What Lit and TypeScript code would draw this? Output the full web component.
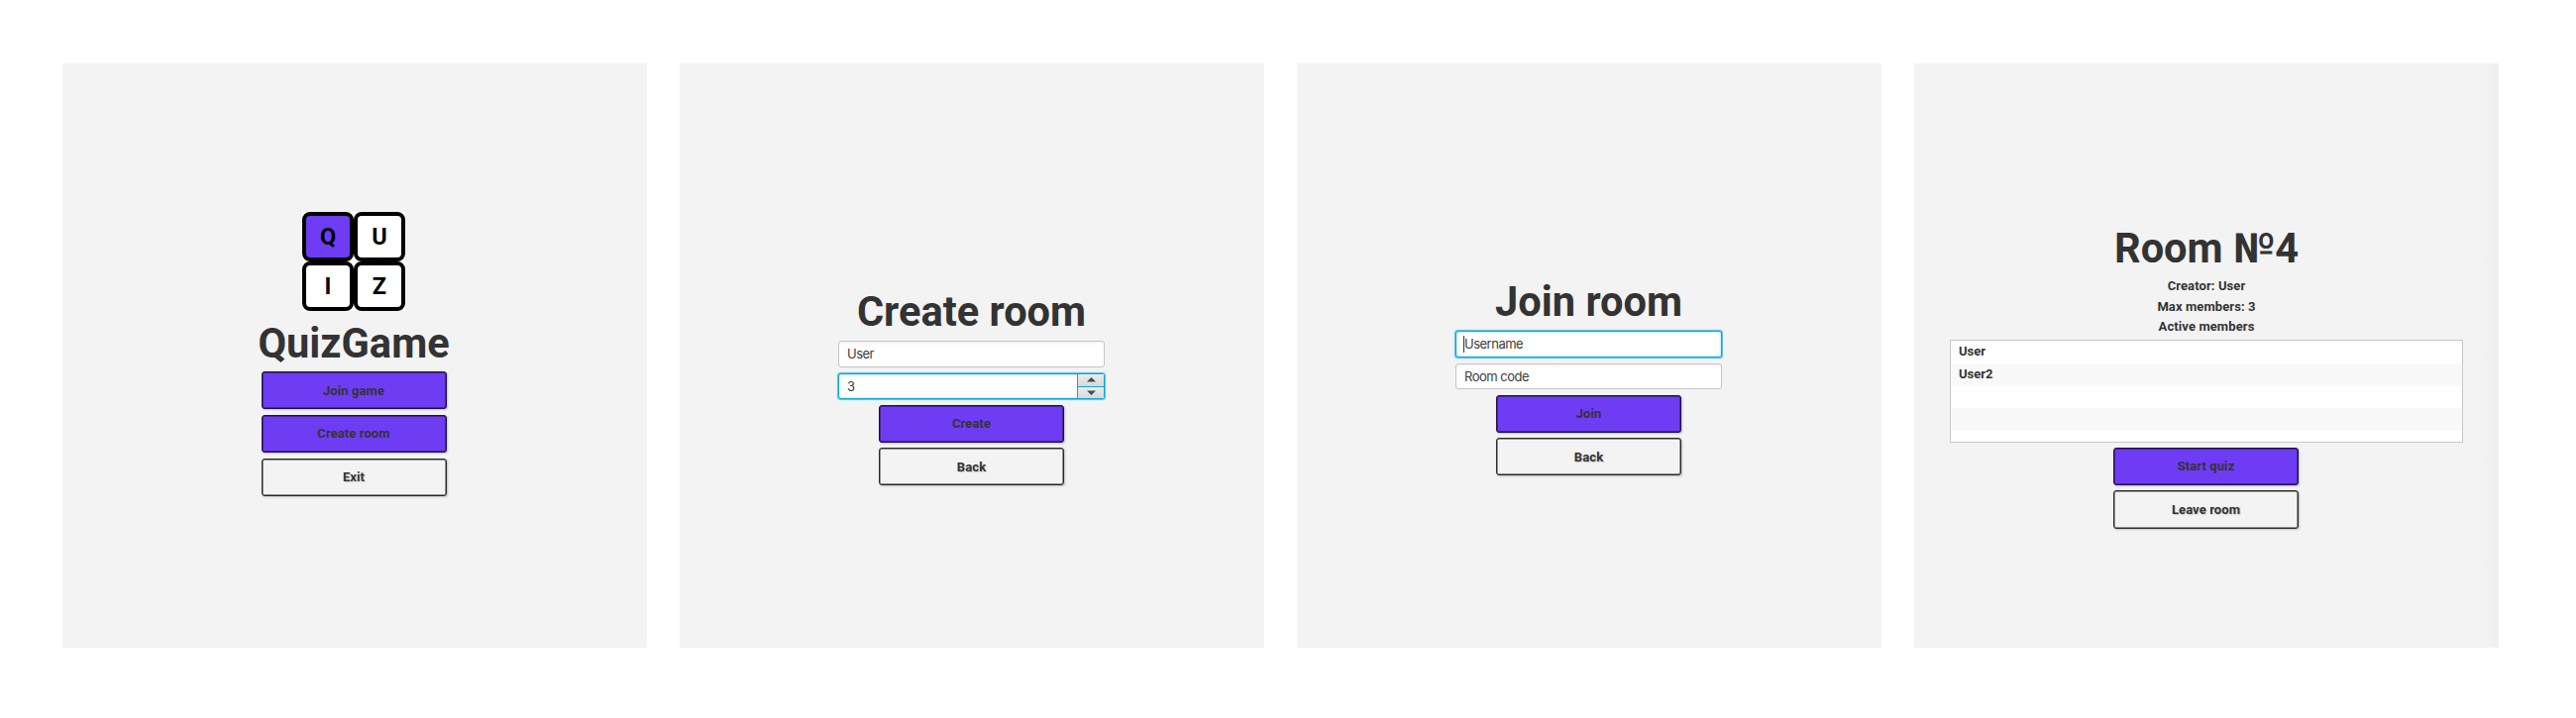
import { LitElement, html, css } from "lit";
import { customElement } from "lit/decorators.js";

@customElement("app-root")
export class AppRoot extends LitElement {
  static styles = css`
    :host {
      display: flex;
      gap: 33px;
      box-sizing: border-box;
      width: 2600px;
      height: 725px;
      padding: 64px 0 0 63px;
      background: #fff;
      color: #333;
      font: 700 13px/20px Roboto, sans-serif;
    }
    * { box-sizing: border-box; }
    .panel {
      width: 590px;
      height: 590px;
      background: #f3f3f3;
      display: flex;
      flex-direction: column;
      align-items: center;
    }
    .home { padding-top: 150px; padding-right: 2px; }
    .create { padding-top: 223px; padding-right: 1px; }
    .join { padding-top: 213px; padding-right: 1px; }
    .room {
      padding-top: 159px;
      background: linear-gradient(90deg, #f3f3f3 97.5%, #eee);
    }
    .title {
      margin: 0;
      height: 57px;
      font-size: 41.6px;
      line-height: 55px;
      font-weight: 700;
      white-space: nowrap;
    }
    .home .title { height: 61px; line-height: 65px; }
    .logo {
      display: grid;
      grid-template-columns: 52px 52px;
      grid-template-rows: 50px 50px;
      width: 104px;
      height: 100px;
      background: #fff;
      color: #000;
    }
    .tile {
      display: flex;
      align-items: center;
      justify-content: center;
      border: 4px solid #000;
      border-radius: 8px;
      background: #fff;
      font-size: 23.5px;
      line-height: 24px;
    }
    .hot { background: #6e3cf2; }
    .actions {
      display: grid;
      gap: 5.6px;
      width: 187px;
    }
    .btn {
      height: 38.2px;
      padding: 1px 0 0;
      border: 1px solid #292929;
      border-radius: 3px;
      background: #f3f3f3;
      color: #333;
      font: inherit;
      letter-spacing: 0.1px;
      box-shadow: inset 0 0 0 0.5px #333, 1px 1px 2px rgba(0, 0, 0, 0.22);
      text-shadow: 1px 1px 1px rgba(0, 0, 0, 0.18);
    }
    .primary {
      border-color: #211047;
      background: #6e3cf2;
      box-shadow: inset 0 0 0 0.5px #211047, 1px 1px 2px rgba(0, 0, 0, 0.22);
      text-shadow: none;
    }
    .fields {
      display: grid;
      gap: 6px;
      width: 269px;
      margin-bottom: 5.5px;
    }
    .field {
      display: flex;
      align-items: center;
      height: 26.5px;
      padding-left: 8px;
      border: 1px solid #c4c4c4;
      border-radius: 3px;
      background: linear-gradient(#f4f4f4, #fff 4px);
      color: #3c3c3c;
      font: 400 13px/20px Inter, sans-serif;
      letter-spacing: -0.5px;
    }
    .focus {
      border-color: #12a5d8;
      background: #fff;
      box-shadow: 0 0 1px 0.5px #4fbfe5, inset 0 0 2px 1px #d4f0fa;
    }
    .caret {
      width: 1px;
      height: 17px;
      background: #333;
    }
    .typing { padding-left: 7px; }
    .spinner { padding-right: 0; }
    .value { flex: 1; }
    .steps {
      width: 27px;
      height: 100%;
      display: grid;
      grid-template-rows: 1fr 1fr;
      border-left: 1px solid #12a5d8;
    }
    .step {
      display: flex;
      align-items: center;
      justify-content: center;
      background: linear-gradient(#ececec, #d8d8d8);
    }
    .down { border-top: 1px solid #12a5d8; }
    .info {
      height: 20.7px;
      line-height: 18.7px;
      letter-spacing: 0.1px;
    }
    .list {
      width: 518px;
      height: 104px;
      margin: 1px 0 4.5px;
      border: 1px solid #c8c8c8;
      background: repeating-linear-gradient(#fff 0 22.8px, #f9f9f9 22.8px 45.6px);
    }
    .member {
      height: 22.8px;
      padding-left: 8px;
      line-height: 22px;
    }
    .room .actions { margin-right: 1px; }
  `;

  private button(label: string, primary = false) {
    return html`<button class="btn ${primary ? "primary" : ""}">${label}</button>`;
  }

  render() {
    return html`
      <section class="panel home">
        <div class="logo">
          <div class="tile hot">Q</div>
          <div class="tile">U</div>
          <div class="tile">I</div>
          <div class="tile">Z</div>
        </div>
        <h1 class="title">QuizGame</h1>
        <div class="actions">
          ${this.button("Join game", true)}${this.button("Create room", true)}${this.button("Exit")}
        </div>
      </section>
      <section class="panel create">
        <h1 class="title">Create room</h1>
        <div class="fields">
          <div class="field">User</div>
          <div class="field focus spinner">
            <span class="value">3</span>
            <div class="steps">
              <div class="step">
                <svg width="9" height="5" viewBox="0 0 9 5"><path d="M0 4.5 4.5 0 9 4.5z" fill="#4a4a4a" /></svg>
              </div>
              <div class="step down">
                <svg width="9" height="5" viewBox="0 0 9 5"><path d="M0 .5 4.5 5 9 .5z" fill="#4a4a4a" /></svg>
              </div>
            </div>
          </div>
        </div>
        <div class="actions">${this.button("Create", true)}${this.button("Back")}</div>
      </section>
      <section class="panel join">
        <h1 class="title">Join room</h1>
        <div class="fields">
          <div class="field focus typing"><span class="caret"></span>Username</div>
          <div class="field">Room code</div>
        </div>
        <div class="actions">${this.button("Join", true)}${this.button("Back")}</div>
      </section>
      <section class="panel room">
        <h1 class="title">Room №4</h1>
        <div class="info">Creator: User</div>
        <div class="info">Max members: 3</div>
        <div class="info">Active members</div>
        <div class="list">
          <div class="member">User</div>
          <div class="member">User2</div>
        </div>
        <div class="actions">${this.button("Start quiz", true)}${this.button("Leave room")}</div>
      </section>
    `;
  }
}
